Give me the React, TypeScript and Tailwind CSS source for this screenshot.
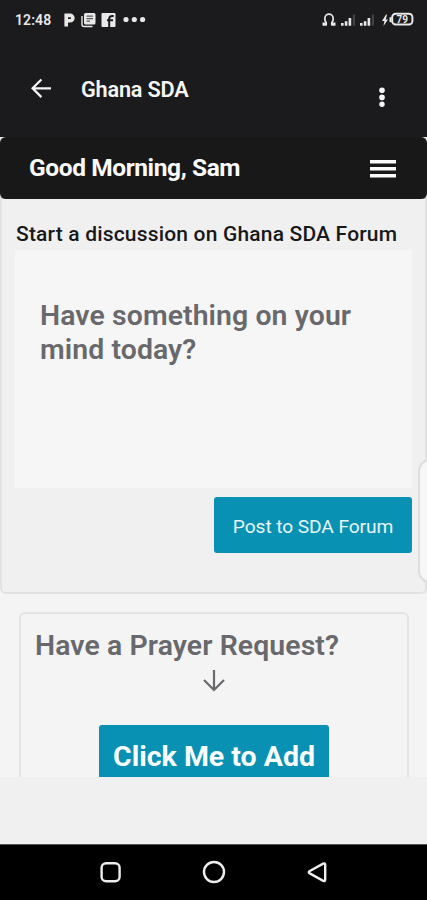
import React from "react";

const App: React.FC = () => {
  return (
    <div className="flex h-[900px] w-[427px] flex-col overflow-hidden bg-[#f0f0f0] font-['Roboto',sans-serif]">
      <StatusBar />
      <AppBar />

      {/* Page content, cut off above the system bar */}
      <main className="relative h-[640px] overflow-hidden bg-[#f4f4f4]">
        <Greeting />
        <ForumCard />
        <PrayerCard />

        {/* Edge panel handle */}
        <div className="absolute top-[322px] left-[418px] h-[124px] w-6 rounded-[14px] border-2 border-[#dedede] bg-[#f7f7f7]" />
      </main>

      <NavBar />
    </div>
  );
};

/* -------- Android status bar -------- */
const StatusBar = () => (
  <div className="flex h-10 items-center justify-between bg-[#1b1b1d] pr-[13px] pl-[15px] text-[#e8e8e8]">
    <div className="flex items-center">
      <span className="w-[37px] text-[14px] leading-5 font-semibold tracking-[0.1px] whitespace-nowrap">
        12:48
      </span>
      <svg className="ml-3 h-4 w-3" viewBox="0 0 12 16" fill="none">
        <path
          d="M2.2 14.5V3.4H6.2a2.6 2.6 0 0 1 0 5.4H3"
          stroke="currentColor"
          strokeWidth="3.6"
        />
      </svg>
      <svg className="ml-[5px] h-4 w-[15px]" viewBox="0 0 15 16" fill="none">
        <path d="M1 4v8.5q0 2 2 2h8.5" stroke="currentColor" strokeWidth="1.4" />
        <rect x="3" y="1" width="11.5" height="11.5" rx="1.5" fill="currentColor" />
        <path
          d="M5.5 4.2h6.5M5.5 6.7h6.5M5.5 9.2h3.5"
          stroke="#5a5a5c"
          strokeWidth="1.2"
        />
      </svg>
      <svg className="ml-[5px] h-4 w-[15px]" viewBox="0 0 15 16">
        <rect x="0.5" y="1" width="14" height="14" rx="1" fill="currentColor" />
        <path
          d="M8.2 15V7q0-3 3-3h1.5M6 8.3h6"
          fill="none"
          stroke="#1b1b1d"
          strokeWidth="2"
        />
      </svg>
      <svg className="ml-[7px] h-2 w-6" viewBox="0 0 24 8" fill="currentColor">
        <circle cx="3" cy="3.5" r="2.6" />
        <circle cx="11.3" cy="3.5" r="2.6" />
        <circle cx="19.6" cy="3.5" r="2.6" />
      </svg>
    </div>
    <div className="flex items-center">
      <svg className="h-4 w-[14px]" viewBox="0 0 14 16" fill="none">
        <path
          d="M4.2 13V10.5L2.9 8.5V6.2a4.1 4.1 0 0 1 8.2 0V8.5l-1.3 2V13"
          stroke="currentColor"
          strokeWidth="1.7"
        />
        <path d="M.5 10.5h4.4v3.3H.5zM9.1 10.5h4.4v3.3H9.1z" fill="currentColor" />
      </svg>
      <Signal className="ml-[5px]" />
      <Signal className="ml-1" />
      <svg className="ml-[7px] h-4 w-8" viewBox="0 0 32 16" fill="none">
        <path d="M4 2.5 0 9h2.4L1.5 14 6 7.5H3.8L5 2.5z" fill="currentColor" />
        <path d="M7.5 5.2h2v5h-2z" fill="currentColor" />
        <rect
          x="10.2"
          y="1.8"
          width="20.2"
          height="10.8"
          rx="3.5"
          stroke="currentColor"
          strokeWidth="2"
        />
        <text x="14.6" y="10.9" fontSize="10" fontWeight="700" fill="currentColor">
          79
        </text>
      </svg>
    </div>
  </div>
);

const Signal = ({ className }: { className: string }) => (
  <svg className={`h-4 w-[15px] ${className}`} viewBox="0 0 15 16">
    <path
      d="M0 11h2.6v2.7H0zM3.8 9.2h2.6v4.5H3.8zM7.6 6h2.6v7.7H7.6z"
      fill="currentColor"
    />
    <path d="M11.8 2.5H14v11.2h-2.2z" fill="#424244" />
  </svg>
);

/* -------- Title bar -------- */
const AppBar = () => (
  <header className="flex h-[97px] items-start bg-[#1b1b1d] pl-[31px] text-[#f5f5f5]">
    <svg className="mt-[38px] h-5 w-5" viewBox="0 0 20 20" fill="none">
      <path
        d="M20 10.3H1.8M10.4 1.5 1.6 10.3l8.8 8.8"
        stroke="currentColor"
        strokeWidth="2.3"
      />
    </svg>
    <h1 className="mt-9 ml-[30px] text-[21.7px] leading-7 font-semibold tracking-[-0.2px] whitespace-nowrap">
      Ghana SDA
    </h1>
    <svg className="mt-[47px] mr-[41px] ml-auto h-5 w-2" viewBox="0 0 8 20" fill="currentColor">
      <circle cx="4" cy="3.3" r="2.8" />
      <circle cx="4" cy="10.4" r="2.8" />
      <circle cx="4" cy="17.3" r="2.7" />
    </svg>
  </header>
);

/* -------- Greeting bar -------- */
const Greeting = () => (
  <div className="bg-[linear-gradient(#e8e8e8_50%,#f0f0f0_50%)]">
    <div className="flex h-[62px] items-center justify-between rounded-md bg-[#181818] pr-[31px] pl-[29px] text-[#fafafa] shadow-[0_1px_2px_#0006]">
      <h2 className="text-[24.5px] leading-8 font-bold tracking-[-0.4px] whitespace-nowrap">
        Good Morning, Sam
      </h2>
      <svg className="mt-[2px] h-5 w-[26px]" viewBox="0 0 26 20" fill="currentColor">
        <path d="M0 1h26v3.6H0zM0 8h26v3.6H0zM0 15h26v3.6H0z" />
      </svg>
    </div>
  </div>
);

/* -------- Forum post form -------- */
const ForumCard = () => (
  <section className="flex h-[395px] flex-col rounded-b-md border-2 border-t-0 border-[#e2e2e2] bg-[#f0f0f0] px-[13px]">
    <h3 className="mt-[21px] ml-px text-[21px] leading-7 font-medium tracking-[0.18px] whitespace-nowrap text-[#18181a]">
      Start a discussion on Ghana SDA Forum
    </h3>
    <div className="mt-[2px] h-[238px] bg-[#f6f6f6] px-[25px] pt-[49px] text-[28.4px] leading-[34px] font-semibold tracking-[0.1px] text-[#68686d]">
      Have something on your mind today?
    </div>
    <button className="mt-[9px] h-[56px] w-[198px] self-end rounded-[3px] bg-[#0991b4] pt-[5px] text-[19.2px] tracking-[-0.1px] whitespace-nowrap text-[#e6f6fa]">
      Post to SDA Forum
    </button>
  </section>
);

/* -------- Prayer request -------- */
const PrayerCard = () => (
  <section className="mt-[18px] mr-[18px] ml-[19px] flex h-[240px] flex-col rounded-md border-2 border-[#e4e4e4] px-[14px]">
    <h3 className="mt-[15px] text-[28.4px] leading-[34px] font-semibold tracking-[0.1px] whitespace-nowrap text-[#68686d]">
      Have a Prayer Request?
    </h3>
    <svg className="mt-[6px] h-6 w-6 self-center text-[#68686d]" viewBox="0 0 24 24" fill="none">
      <path d="M12 1v20M2 11l10 10 10-10" stroke="currentColor" strokeWidth="2.2" />
    </svg>
    <button className="mt-[32px] h-[62px] w-[230px] self-center rounded-[3px] bg-[#0991b4] pt-[2px] text-[28.5px] font-bold whitespace-nowrap text-[#fafeff]">
      Click Me to Add
    </button>
  </section>
);

/* -------- Android navigation bar -------- */
const NavBar = () => (
  <nav className="mt-auto flex h-14 items-center justify-between border-t border-[#555] bg-black px-[98px] pb-[2px] text-[#eee]">
    <svg className="h-6 w-6" viewBox="0 0 24 24" fill="none" stroke="currentColor" strokeWidth="2.4">
      <rect x="3.6" y="3.2" width="18" height="18" rx="4.5" />
    </svg>
    <svg className="h-6 w-6" viewBox="0 0 24 24" fill="none" stroke="currentColor" strokeWidth="2.4">
      <circle cx="12" cy="12" r="10" />
    </svg>
    <svg className="h-6 w-6" viewBox="0 0 24 24" fill="none" stroke="currentColor" strokeWidth="2.4">
      <path d="M18.2 3.6 4.8 11q-2 1.2 0 2.4l13.4 7.4q2 .8 2-1.2V4.8q0-2-2-1.2z" />
    </svg>
  </nav>
);

export default App;
